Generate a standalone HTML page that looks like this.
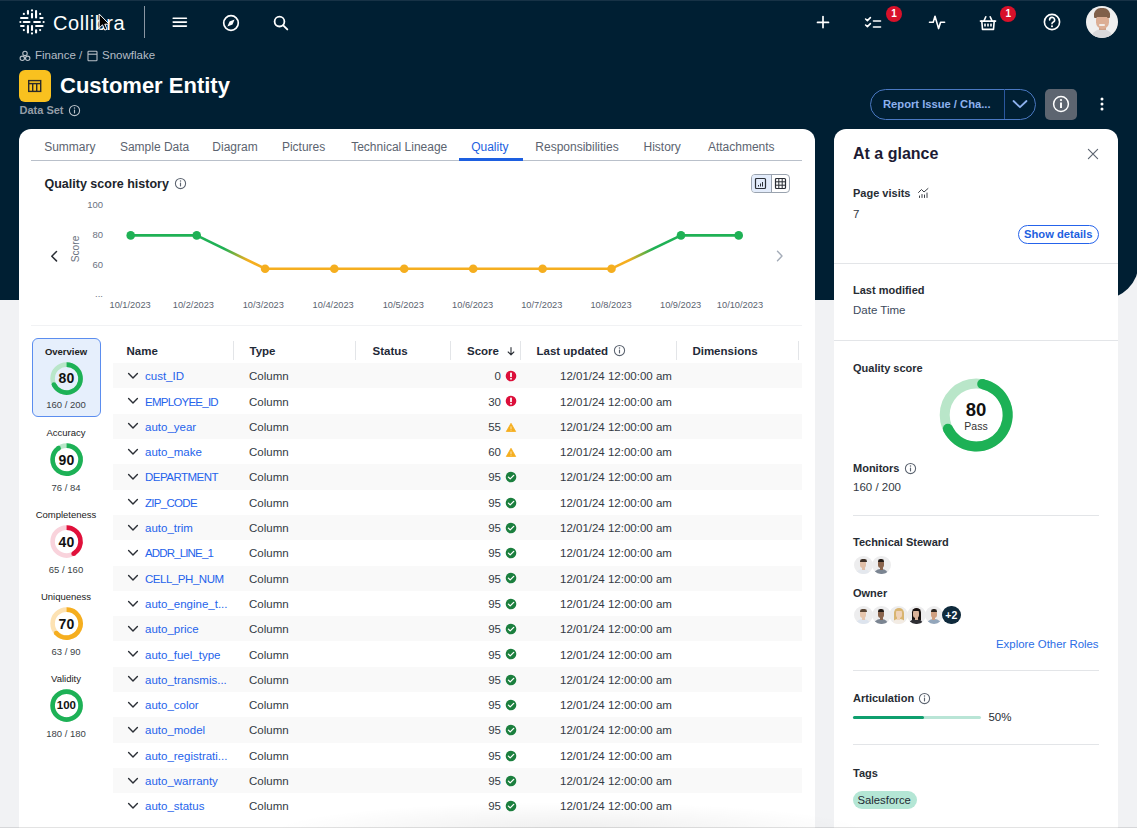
<!DOCTYPE html>
<html><head><meta charset="utf-8"><style>
*{box-sizing:border-box;margin:0;padding:0}
html,body{width:1137px;height:828px;overflow:hidden;background:#f1f2f4;font-family:"Liberation Sans",sans-serif;}
.a{position:absolute;white-space:nowrap}
#hdr{position:absolute;left:0;top:0;width:1139px;height:300px;background:#001f33;border-bottom-right-radius:38px}
#topline{position:absolute;left:0;top:0;width:1137px;height:1px;background:#173246}
.w{color:#fff}
.tab{position:absolute;top:140.8px;font-size:12px;color:#5c6470;line-height:12px}
.card{position:absolute;background:#fff}
.ylab{position:absolute;font-size:9.5px;color:#6b7280;text-align:right;width:30px;line-height:10px}
.xlab{position:absolute;font-size:9.25px;color:#5c6470;width:70px;text-align:center;line-height:10px;top:300px}
.row{position:absolute;left:113px;width:689px;height:25.3px}
.row.s{background:#f9f9f9}
.tn{position:absolute;left:145px;font-size:11.5px;color:#2563eb;line-height:14px}
.tt{position:absolute;left:249px;font-size:11.5px;color:#333a44;line-height:14px}
.ts{position:absolute;right:636px;font-size:11.5px;color:#333a44;line-height:14px;text-align:right}
.td{position:absolute;left:560px;font-size:11.5px;color:#333a44;line-height:14px}
.th{position:absolute;top:346.1px;font-size:11.5px;font-weight:bold;color:#1f2a37;line-height:11.5px}
.cdiv{position:absolute;top:341px;width:1px;height:19px;background:#e3e5e8}
.ql{position:absolute;left:31px;width:70px;text-align:center;font-size:9.5px;color:#222;line-height:11px}
.sep{position:absolute;height:1px;background:#e3e5e8}
</style></head><body>
<div id="hdr"></div><div id="topline"></div>
<svg class="a" style="left:15.5px;top:6.2px" width="32" height="32" viewBox="-16 -16 32 32"><g stroke="#fff" stroke-width="2.1" stroke-linecap="round" fill="#fff"><line x1="-4.06" y1="-10.96" x2="-4.06" y2="-8.36"/><circle cx="0.00" cy="-11.61" r="1.1" stroke="none"/><line x1="0.00" y1="-8.08" x2="0.00" y2="-4.51"/><line x1="4.06" y1="-10.96" x2="4.06" y2="-4.51"/><line x1="-10.96" y1="-4.06" x2="-4.51" y2="-4.06"/><circle cx="-11.61" cy="0.00" r="1.1" stroke="none"/><line x1="-8.28" y1="0.00" x2="-2.56" y2="0.00"/><line x1="-10.96" y1="4.06" x2="-8.36" y2="4.06"/><line x1="8.36" y1="-4.06" x2="10.56" y2="-4.06"/><line x1="2.19" y1="0.00" x2="7.88" y2="0.00"/><circle cx="11.61" cy="0.00" r="1.1" stroke="none"/><line x1="4.10" y1="4.06" x2="10.56" y2="4.06"/><line x1="-4.06" y1="4.10" x2="-4.06" y2="10.56"/><line x1="0.00" y1="4.10" x2="0.00" y2="7.88"/><circle cx="0.00" cy="11.41" r="1.1" stroke="none"/><line x1="4.06" y1="8.36" x2="4.06" y2="10.56"/><circle cx="-8.12" cy="-8.12" r="1.1" stroke="none"/><circle cx="8.12" cy="-8.12" r="1.1" stroke="none"/><circle cx="-8.12" cy="8.12" r="1.1" stroke="none"/><circle cx="8.12" cy="8.12" r="1.1" stroke="none"/></g></svg>

<div class="a w" style="left:53px;top:12.6px;font-size:20px;line-height:20px;letter-spacing:0.55px">Collibra</div>
<div class="a" style="left:144px;top:6px;width:1.2px;height:32px;background:#8a96a3"></div>
<svg class="a" style="left:171px;top:14px" width="18" height="16" viewBox="0 0 18 16"><g stroke="#fff" stroke-width="1.6" stroke-linecap="round"><line x1="2.2" y1="4.2" x2="15.4" y2="4.2"/><line x1="2.2" y1="8.1" x2="15.4" y2="8.1"/><line x1="2.2" y1="12.1" x2="15.4" y2="12.1"/></g></svg>
<svg class="a" style="left:221px;top:12.5px" width="20" height="20" viewBox="0 0 20 20"><circle cx="10" cy="10" r="7.3" stroke="#fff" stroke-width="1.7" fill="none"/><path d="M13.6 6.4 L11.5 11.5 L6.4 13.6 L8.5 8.5 Z" fill="#fff"/></svg>
<svg class="a" style="left:271px;top:12.5px" width="20" height="20" viewBox="0 0 20 20"><circle cx="8.5" cy="8.6" r="4.9" stroke="#fff" stroke-width="1.8" fill="none"/><line x1="12.2" y1="12.3" x2="16.3" y2="16.4" stroke="#fff" stroke-width="1.9" stroke-linecap="round"/></svg>
<svg class="a" style="left:813px;top:11.7px" width="20" height="20" viewBox="0 0 20 20"><g stroke="#fff" stroke-width="1.7" stroke-linecap="round"><line x1="10" y1="4.6" x2="10" y2="15.6"/><line x1="4.5" y1="10.4" x2="15.5" y2="10.4"/></g></svg>
<svg class="a" style="left:863px;top:12.5px" width="20" height="20" viewBox="0 0 20 20"><g stroke="#fff" stroke-width="1.6" stroke-linecap="round" stroke-linejoin="round" fill="none"><path d="M2.6 6 L4.4 7.6 L7.4 4.6"/><path d="M2.6 12 L4.4 13.6 L7.4 10.6"/><line x1="10.5" y1="8" x2="17.5" y2="8"/><line x1="10.5" y1="14" x2="17.5" y2="14"/></g></svg>
<div class="a" style="left:886px;top:6.4px;width:16px;height:16px;border-radius:8px;background:#d8112a;color:#fff;font-size:10px;font-weight:bold;text-align:center;line-height:16px">1</div>
<svg class="a" style="left:927px;top:11.7px" width="20" height="20" viewBox="0 0 20 20"><path d="M2.5 10.2 H6.2 L8 4.2 L11.6 16.6 L13.6 10.2 H17.6" stroke="#fff" stroke-width="1.6" fill="none" stroke-linejoin="round" stroke-linecap="round"/></svg>
<svg class="a" style="left:978px;top:12.5px" width="20" height="20" viewBox="0 0 20 20"><g stroke="#fff" stroke-width="1.6" fill="none" stroke-linejoin="round" stroke-linecap="round"><path d="M2.4 8.1 H17.6"/><path d="M3.8 8.1 L4.5 16.4 H15.5 L16.2 8.1"/><path d="M6.0 7.9 L7.8 3.8"/><path d="M14 7.9 L12.2 3.8"/></g><g fill="#fff"><rect x="6.2" y="10.6" width="1.6" height="2.9"/><rect x="9.2" y="10.6" width="1.6" height="2.9"/><rect x="12.2" y="10.6" width="1.6" height="2.9"/></g></svg>
<div class="a" style="left:1000.3px;top:6.3px;width:16px;height:16px;border-radius:8px;background:#d8112a;color:#fff;font-size:10px;font-weight:bold;text-align:center;line-height:16px">1</div>
<svg class="a" style="left:1042px;top:12.3px" width="20" height="20" viewBox="0 0 20 20"><circle cx="10" cy="10" r="7.6" stroke="#fff" stroke-width="1.6" fill="none"/><path d="M7.6 7.9 A2.5 2.5 0 1 1 11 10.2 Q10 10.7 10 11.8" stroke="#fff" stroke-width="1.6" fill="none" stroke-linecap="round"/><circle cx="10" cy="14.2" r="1" fill="#fff"/></svg>
<div class="a" style="left:1086.2px;top:6.2px;width:31.8px;height:31.8px;border-radius:15.9px;background:#efefef;overflow:hidden">
  <div class="a" style="left:4px;top:23px;width:24px;height:14px;border-radius:12px 12px 0 0;background:#d9d9db"></div>
  <div class="a" style="left:12.5px;top:19px;width:7px;height:5px;background:#cfa086"></div>
  <div class="a" style="left:9.5px;top:7.5px;width:13.5px;height:15.5px;border-radius:6.5px 6.5px 7.5px 7.5px;background:#dcae94"></div>
  <div class="a" style="left:8px;top:2px;width:15.8px;height:8.5px;border-radius:8px 8px 3px 3px;background:#80604a"></div>
  <div class="a" style="left:8px;top:7px;width:2.6px;height:5px;border-radius:1px;background:#80604a"></div>
  <div class="a" style="left:21px;top:7px;width:2.6px;height:5px;border-radius:1px;background:#80604a"></div>
  <div class="a" style="left:13px;top:17.6px;width:6px;height:1.8px;border-radius:1px;background:#f2ebe6"></div>
</div>
<svg class="a" style="left:19px;top:49.5px" width="12" height="12" viewBox="0 0 12 12"><g stroke="#b8c0c8" stroke-width="1.1" fill="none"><circle cx="6" cy="3.4" r="2.2"/><circle cx="3.3" cy="8.3" r="2.2"/><circle cx="8.7" cy="8.3" r="2.2"/></g></svg>
<div class="a" style="left:35px;top:49.6px;font-size:11.5px;line-height:11.5px;color:#b4bcc5">Finance /</div>
<svg class="a" style="left:87px;top:49.5px" width="11" height="12" viewBox="0 0 11 12"><g stroke="#b8c0c8" stroke-width="1.1" fill="none"><rect x="1" y="1.2" width="9" height="9.6" rx="0.8"/><line x1="1" y1="4.2" x2="10" y2="4.2"/></g></svg>
<div class="a" style="left:102px;top:49.6px;font-size:11.5px;line-height:11.5px;color:#b4bcc5">Snowflake</div>
<div class="a" style="left:19px;top:70px;width:31.5px;height:31.5px;border-radius:6px;background:#f9c11f"></div>
<svg class="a" style="left:27px;top:77.5px" width="16" height="16" viewBox="0 0 16 16"><g stroke="#2a2a2a" stroke-width="1.4" fill="none"><rect x="1.7" y="2.6" width="12" height="10.8"/><line x1="1.7" y1="5.6" x2="13.7" y2="5.6"/><line x1="5.7" y1="5.6" x2="5.7" y2="13.4"/><line x1="9.7" y1="5.6" x2="9.7" y2="13.4"/></g></svg>
<div class="a w" style="left:60px;top:74.9px;font-size:22px;line-height:22px;font-weight:bold">Customer Entity</div>
<div class="a" style="left:19.5px;top:105.3px;font-size:11px;line-height:11px;font-weight:bold;color:#949da7">Data Set</div>

<svg class="a" style="left:67.5px;top:104.3px" width="13" height="13" viewBox="0 0 13 13"><circle cx="6.5" cy="6.5" r="5.1" stroke="#b8c0c8" stroke-width="1.05" fill="none"/><line x1="6.5" y1="5.6" x2="6.5" y2="9.4" stroke="#b8c0c8" stroke-width="1.15"/><circle cx="6.5" cy="3.9" r="0.75" fill="#b8c0c8"/></svg>

<div class="a" style="left:870.3px;top:88.7px;width:165.3px;height:31px;border-radius:15.5px;border:1px solid #4a78c2"></div>
<div class="a" style="left:1003.5px;top:89px;width:1.2px;height:30px;background:#2a579e"></div>
<div class="a" style="left:883px;top:98.9px;font-size:11.2px;line-height:11.2px;font-weight:bold;color:#8db1ee">Report Issue / Cha...</div>
<svg class="a" style="left:1010px;top:96px" width="20" height="16" viewBox="0 0 20 16"><path d="M3.5 5 L10 11.2 L16.5 5" stroke="#8db1ee" stroke-width="1.8" fill="none" stroke-linecap="round" stroke-linejoin="round"/></svg>
<div class="a" style="left:1045.3px;top:88.7px;width:31.5px;height:31px;border-radius:5px;background:#5d6570"></div>
<svg class="a" style="left:1051px;top:94.2px" width="20" height="20" viewBox="0 0 20 20"><circle cx="10" cy="10" r="7.4" stroke="#fff" stroke-width="1.5" fill="none"/><line x1="10" y1="8.6" x2="10" y2="14" stroke="#fff" stroke-width="1.9"/><circle cx="10" cy="6.1" r="1.1" fill="#fff"/></svg>
<svg class="a" style="left:1097px;top:96px" width="10" height="16" viewBox="0 0 10 16"><g fill="#fff"><circle cx="5" cy="3" r="1.5"/><circle cx="5" cy="8" r="1.5"/><circle cx="5" cy="13" r="1.5"/></g></svg>

<div class="card" style="left:19px;top:129px;width:796px;height:720px;border-radius:12px 12px 0 0"></div>
<div class="card" style="left:834px;top:129px;width:284px;height:720px;border-radius:12px 12px 0 0"></div>
<div class="a" style="left:31px;top:159.8px;width:771px;height:1.2px;background:#b9c0ca"></div>
<div class="a" style="left:459px;top:158.2px;width:63.5px;height:2.6px;background:#1d5fe0"></div>
<div class="tab" style="left:44.2px">Summary</div><div class="tab" style="left:119.9px">Sample Data</div><div class="tab" style="left:212.3px">Diagram</div><div class="tab" style="left:281.9px">Pictures</div><div class="tab" style="left:351.2px">Technical Lineage</div><div class="tab" style="left:471.2px;color:#1d5fe0">Quality</div><div class="tab" style="left:535.3px">Responsibilities</div><div class="tab" style="left:643.5px">History</div><div class="tab" style="left:707.9px">Attachments</div>
<svg class="a" style="left:0;top:0" width="815" height="330" viewBox="0 0 815 330"><defs><linearGradient id="gd" gradientUnits="userSpaceOnUse" x1="196.7" y1="0" x2="265.1" y2="0"><stop offset="0.4" stop-color="#1fb155"/><stop offset="0.75" stop-color="#f5ae1f"/></linearGradient><linearGradient id="gu" gradientUnits="userSpaceOnUse" x1="611.5" y1="0" x2="681" y2="0"><stop offset="0.25" stop-color="#f5ae1f"/><stop offset="0.6" stop-color="#1fb155"/></linearGradient></defs><line x1="130.7" y1="235.4" x2="196.7" y2="235.4" stroke="#1fb155" stroke-width="2.6"/><line x1="196.7" y1="235.4" x2="265.1" y2="268.7" stroke="url(#gd)" stroke-width="2.6"/><line x1="265.1" y1="268.7" x2="334.3" y2="268.7" stroke="#f5ae1f" stroke-width="2.6"/><line x1="334.3" y1="268.7" x2="404.2" y2="268.7" stroke="#f5ae1f" stroke-width="2.6"/><line x1="404.2" y1="268.7" x2="473.2" y2="268.7" stroke="#f5ae1f" stroke-width="2.6"/><line x1="473.2" y1="268.7" x2="542.6" y2="268.7" stroke="#f5ae1f" stroke-width="2.6"/><line x1="542.6" y1="268.7" x2="611.5" y2="268.7" stroke="#f5ae1f" stroke-width="2.6"/><line x1="611.5" y1="268.7" x2="681" y2="235.4" stroke="url(#gu)" stroke-width="2.6"/><line x1="681" y1="235.4" x2="738.7" y2="235.4" stroke="#1fb155" stroke-width="2.6"/><circle cx="130.7" cy="235.4" r="4.3" fill="#1fb155"/><circle cx="196.7" cy="235.4" r="4.3" fill="#1fb155"/><circle cx="265.1" cy="268.7" r="4.3" fill="#f5ae1f"/><circle cx="334.3" cy="268.7" r="4.3" fill="#f5ae1f"/><circle cx="404.2" cy="268.7" r="4.3" fill="#f5ae1f"/><circle cx="473.2" cy="268.7" r="4.3" fill="#f5ae1f"/><circle cx="542.6" cy="268.7" r="4.3" fill="#f5ae1f"/><circle cx="611.5" cy="268.7" r="4.3" fill="#f5ae1f"/><circle cx="681" cy="235.4" r="4.3" fill="#1fb155"/><circle cx="738.7" cy="235.4" r="4.3" fill="#1fb155"/><path d="M56.5 251.5 L51.8 256.2 L56.5 260.9" stroke="#2b2f36" stroke-width="1.5" fill="none" stroke-linecap="round" stroke-linejoin="round"/><path d="M777.5 251.3 L782 256 L777.5 260.7" stroke="#a4acb8" stroke-width="1.4" fill="none" stroke-linecap="round" stroke-linejoin="round"/></svg>
<div class="xlab" style="left:95.1px">10/1/2023</div><div class="xlab" style="left:158.4px">10/2/2023</div><div class="xlab" style="left:228.3px">10/3/2023</div><div class="xlab" style="left:298.2px">10/4/2023</div><div class="xlab" style="left:368.3px">10/5/2023</div><div class="xlab" style="left:437.7px">10/6/2023</div><div class="xlab" style="left:506.79999999999995px">10/7/2023</div><div class="xlab" style="left:576px">10/8/2023</div><div class="xlab" style="left:645.6px">10/9/2023</div><div class="xlab" style="left:705px">10/10/2023</div>
<div class="a" style="left:44.5px;top:177.8px;font-size:12.5px;line-height:12.5px;font-weight:bold;color:#20242b">Quality score history</div>
<svg class="a" style="left:174.2px;top:177.2px" width="13" height="13" viewBox="0 0 13 13"><circle cx="6.5" cy="6.5" r="5.1" stroke="#5c6470" stroke-width="1.05" fill="none"/><line x1="6.5" y1="5.6" x2="6.5" y2="9.4" stroke="#5c6470" stroke-width="1.15"/><circle cx="6.5" cy="3.9" r="0.75" fill="#5c6470"/></svg>

<div class="a" style="left:751px;top:174px;width:38.5px;height:18.5px;border:1px solid #9aa3af;border-radius:4px;overflow:hidden;background:#fff"><div class="a" style="left:0;top:0;width:19px;height:17px;background:#e3ecfb"></div><div class="a" style="left:19px;top:0;width:1px;height:17px;background:#9aa3af"></div></div>
<svg class="a" style="left:754px;top:177px" width="13" height="13" viewBox="0 0 13 13"><rect x="1.5" y="1.5" width="10" height="10" rx="1" stroke="#2b2f36" stroke-width="1.2" fill="none"/><g stroke="#2b2f36" stroke-width="1"><line x1="4.5" y1="9.5" x2="4.5" y2="8"/><line x1="6.5" y1="9.5" x2="6.5" y2="6.5"/><line x1="8.5" y1="9.5" x2="8.5" y2="5"/></g></svg>
<svg class="a" style="left:773.5px;top:177px" width="13" height="13" viewBox="0 0 13 13"><rect x="1.5" y="1.5" width="10" height="10" rx="1" stroke="#2b2f36" stroke-width="1.2" fill="none"/><g stroke="#2b2f36" stroke-width="1"><line x1="4.8" y1="1.5" x2="4.8" y2="11.5"/><line x1="8.2" y1="1.5" x2="8.2" y2="11.5"/><line x1="1.5" y1="4.8" x2="11.5" y2="4.8"/><line x1="1.5" y1="8.2" x2="11.5" y2="8.2"/></g></svg>
<div class="ylab" style="left:73px;top:200.3px">100</div>
<div class="ylab" style="left:73px;top:230.2px">80</div>
<div class="ylab" style="left:73px;top:259.6px">60</div>
<div class="ylab" style="left:73px;top:289px">...</div>
<div class="a" style="left:55.5px;top:244.3px;width:40px;text-align:center;font-size:10.2px;line-height:10px;color:#6b7280;transform:rotate(-90deg)">Score</div>
<div class="a" style="left:31px;top:324.5px;width:771px;height:1px;background:#f1f2f4"></div>

<div class="a" style="left:31.5px;top:338.2px;width:69.5px;height:78.5px;border:1px solid #5b8def;border-radius:6px;background:#e6effc"></div>
<div class="ql" style="top:346.1px;font-weight:bold;">Overview</div>
<svg class="a" style="left:47.800000000000004px;top:359.9px" width="37.2" height="37.2" viewBox="47.800000000000004 359.9 37.2 37.2"><circle cx="66.4" cy="378.5" r="14" stroke="#b9e6c9" stroke-width="4.6" fill="none"/><path d="M66.40 364.50 A14 14 0 1 1 53.71 384.42" stroke="#1db156" stroke-width="4.6" fill="none"/><circle cx="53.71" cy="384.42" r="2.3" fill="#1db156"/></svg>
<div class="a" style="left:46.4px;width:40px;text-align:center;top:371.2px;font-size:14px;line-height:14px;font-weight:bold;color:#111">80</div>
<div class="ql" style="top:398.9px;color:#3a3f46">160 / 200</div>
<div class="ql" style="top:426.6px;">Accuracy</div>
<svg class="a" style="left:47.800000000000004px;top:441.29999999999995px" width="37.2" height="37.2" viewBox="47.800000000000004 441.29999999999995 37.2 37.2"><circle cx="66.4" cy="459.9" r="14" stroke="#b9e6c9" stroke-width="4.6" fill="none"/><path d="M66.40 445.90 A14 14 0 1 1 58.37 448.43" stroke="#1db156" stroke-width="4.6" fill="none"/><circle cx="58.37" cy="448.43" r="2.3" fill="#1db156"/></svg>
<div class="a" style="left:46.4px;width:40px;text-align:center;top:452.59999999999997px;font-size:14px;line-height:14px;font-weight:bold;color:#111">90</div>
<div class="ql" style="top:482.3px;color:#3a3f46">76 / 84</div>
<div class="ql" style="top:508.6px;">Completeness</div>
<svg class="a" style="left:47.800000000000004px;top:523.3px" width="37.2" height="37.2" viewBox="47.800000000000004 523.3 37.2 37.2"><circle cx="66.4" cy="541.9" r="14" stroke="#f9d3dc" stroke-width="4.6" fill="none"/><path d="M66.40 527.90 A14 14 0 0 1 73.40 554.02" stroke="#e0103a" stroke-width="4.6" fill="none"/><circle cx="73.40" cy="554.02" r="2.3" fill="#e0103a"/></svg>
<div class="a" style="left:46.4px;width:40px;text-align:center;top:534.6px;font-size:14px;line-height:14px;font-weight:bold;color:#111">40</div>
<div class="ql" style="top:564.3px;color:#3a3f46">65 / 160</div>
<div class="ql" style="top:590.6px;">Uniqueness</div>
<svg class="a" style="left:47.800000000000004px;top:605.3px" width="37.2" height="37.2" viewBox="47.800000000000004 605.3 37.2 37.2"><circle cx="66.4" cy="623.9" r="14" stroke="#fde2b3" stroke-width="4.6" fill="none"/><path d="M66.40 609.90 A14 14 0 1 1 56.00 633.27" stroke="#f5ae1f" stroke-width="4.6" fill="none"/><circle cx="56.00" cy="633.27" r="2.3" fill="#f5ae1f"/></svg>
<div class="a" style="left:46.4px;width:40px;text-align:center;top:616.6px;font-size:14px;line-height:14px;font-weight:bold;color:#111">70</div>
<div class="ql" style="top:646.3px;color:#3a3f46">63 / 90</div>
<div class="ql" style="top:672.6px;">Validity</div>
<svg class="a" style="left:47.800000000000004px;top:687.3px" width="37.2" height="37.2" viewBox="47.800000000000004 687.3 37.2 37.2"><circle cx="66.4" cy="705.9" r="14" stroke="#b9e6c9" stroke-width="4.6" fill="none"/><circle cx="66.4" cy="705.9" r="14" stroke="#1db156" stroke-width="4.6" fill="none"/></svg>
<div class="a" style="left:46.4px;width:40px;text-align:center;top:699.85px;font-size:11.5px;line-height:11.5px;font-weight:bold;color:#111">100</div>
<div class="ql" style="top:728.3px;color:#3a3f46">180 / 180</div>
<div class="th" style="left:126.5px">Name</div><div class="th" style="left:249.5px">Type</div><div class="th" style="left:372.5px">Status</div><div class="th" style="left:467px">Score</div><div class="th" style="left:536.5px">Last updated</div><div class="th" style="left:692.4px">Dimensions</div><div class="cdiv" style="left:232.9px"></div><div class="cdiv" style="left:355.3px"></div><div class="cdiv" style="left:450.0px"></div><div class="cdiv" style="left:519.8px"></div><div class="cdiv" style="left:675.5px"></div><div class="cdiv" style="left:798.0px"></div><svg class="a" style="left:505px;top:344px" width="12" height="14" viewBox="0 0 12 14"><path d="M6 3.6 V10.8 M3.2 8 L6 10.8 L8.8 8" stroke="#2b2f36" stroke-width="1.1" fill="none" stroke-linecap="round" stroke-linejoin="round"/></svg><svg class="a" style="left:612.7px;top:344.2px" width="13" height="13" viewBox="0 0 13 13"><circle cx="6.5" cy="6.5" r="5.1" stroke="#5c6470" stroke-width="1.05" fill="none"/><line x1="6.5" y1="5.6" x2="6.5" y2="9.4" stroke="#5c6470" stroke-width="1.15"/><circle cx="6.5" cy="3.9" r="0.75" fill="#5c6470"/></svg><div class="row s" style="top:363.10px"></div><svg class="a" style="left:126.6px;top:369.80px" width="12" height="12" viewBox="0 0 12 12"><path d="M1.6 3.6 L6 8 L10.4 3.6" stroke="#2b2f36" stroke-width="1.4" fill="none" stroke-linecap="round" stroke-linejoin="round"/></svg><div class="tn" style="top:369.20px;letter-spacing:0px">cust_ID</div><div class="tt" style="top:369.20px">Column</div><div class="ts" style="top:369.20px">0</div><div class="td" style="top:369.20px">12/01/24 12:00:00 am</div><svg class="a" style="left:505.1px;top:370.00px" width="12" height="12" viewBox="0 0 12 12"><circle cx="6" cy="6" r="5.3" fill="#dc0f3a"/><rect x="5.1" y="2.6" width="1.8" height="4.4" rx="0.6" fill="#fff"/><circle cx="6" cy="8.8" r="0.95" fill="#fff"/></svg><svg class="a" style="left:126.6px;top:395.10px" width="12" height="12" viewBox="0 0 12 12"><path d="M1.6 3.6 L6 8 L10.4 3.6" stroke="#2b2f36" stroke-width="1.4" fill="none" stroke-linecap="round" stroke-linejoin="round"/></svg><div class="tn" style="top:394.50px;letter-spacing:-0.75px">EMPLOYEE_ID</div><div class="tt" style="top:394.50px">Column</div><div class="ts" style="top:394.50px">30</div><div class="td" style="top:394.50px">12/01/24 12:00:00 am</div><svg class="a" style="left:505.1px;top:395.30px" width="12" height="12" viewBox="0 0 12 12"><circle cx="6" cy="6" r="5.3" fill="#dc0f3a"/><rect x="5.1" y="2.6" width="1.8" height="4.4" rx="0.6" fill="#fff"/><circle cx="6" cy="8.8" r="0.95" fill="#fff"/></svg><div class="row s" style="top:413.70px"></div><svg class="a" style="left:126.6px;top:420.40px" width="12" height="12" viewBox="0 0 12 12"><path d="M1.6 3.6 L6 8 L10.4 3.6" stroke="#2b2f36" stroke-width="1.4" fill="none" stroke-linecap="round" stroke-linejoin="round"/></svg><div class="tn" style="top:419.80px;letter-spacing:0px">auto_year</div><div class="tt" style="top:419.80px">Column</div><div class="ts" style="top:419.80px">55</div><div class="td" style="top:419.80px">12/01/24 12:00:00 am</div><svg class="a" style="left:505.1px;top:420.60px" width="12" height="12" viewBox="0 0 12 12"><path d="M6 2.3 L10.7 10.5 H1.3 Z" fill="#f5ae1f" stroke="#f5ae1f" stroke-width="0.8" stroke-linejoin="round"/><rect x="5.45" y="5.4" width="1.1" height="2.6" fill="#fff" opacity="0.6"/><circle cx="6" cy="9.1" r="0.55" fill="#fff" opacity="0.6"/></svg><svg class="a" style="left:126.6px;top:445.70px" width="12" height="12" viewBox="0 0 12 12"><path d="M1.6 3.6 L6 8 L10.4 3.6" stroke="#2b2f36" stroke-width="1.4" fill="none" stroke-linecap="round" stroke-linejoin="round"/></svg><div class="tn" style="top:445.10px;letter-spacing:0px">auto_make</div><div class="tt" style="top:445.10px">Column</div><div class="ts" style="top:445.10px">60</div><div class="td" style="top:445.10px">12/01/24 12:00:00 am</div><svg class="a" style="left:505.1px;top:445.90px" width="12" height="12" viewBox="0 0 12 12"><path d="M6 2.3 L10.7 10.5 H1.3 Z" fill="#f5ae1f" stroke="#f5ae1f" stroke-width="0.8" stroke-linejoin="round"/><rect x="5.45" y="5.4" width="1.1" height="2.6" fill="#fff" opacity="0.6"/><circle cx="6" cy="9.1" r="0.55" fill="#fff" opacity="0.6"/></svg><div class="row s" style="top:464.30px"></div><svg class="a" style="left:126.6px;top:471.00px" width="12" height="12" viewBox="0 0 12 12"><path d="M1.6 3.6 L6 8 L10.4 3.6" stroke="#2b2f36" stroke-width="1.4" fill="none" stroke-linecap="round" stroke-linejoin="round"/></svg><div class="tn" style="top:470.40px;letter-spacing:-0.52px">DEPARTMENT</div><div class="tt" style="top:470.40px">Column</div><div class="ts" style="top:470.40px">95</div><div class="td" style="top:470.40px">12/01/24 12:00:00 am</div><svg class="a" style="left:505.1px;top:471.20px" width="12" height="12" viewBox="0 0 12 12"><circle cx="6" cy="6" r="5.3" fill="#1b7f3e"/><path d="M3.4 6.1 L5.2 7.9 L8.7 4.4" stroke="#fff" stroke-width="1.3" fill="none" stroke-linecap="round" stroke-linejoin="round"/></svg><svg class="a" style="left:126.6px;top:496.30px" width="12" height="12" viewBox="0 0 12 12"><path d="M1.6 3.6 L6 8 L10.4 3.6" stroke="#2b2f36" stroke-width="1.4" fill="none" stroke-linecap="round" stroke-linejoin="round"/></svg><div class="tn" style="top:495.70px;letter-spacing:-0.7px">ZIP_CODE</div><div class="tt" style="top:495.70px">Column</div><div class="ts" style="top:495.70px">95</div><div class="td" style="top:495.70px">12/01/24 12:00:00 am</div><svg class="a" style="left:505.1px;top:496.50px" width="12" height="12" viewBox="0 0 12 12"><circle cx="6" cy="6" r="5.3" fill="#1b7f3e"/><path d="M3.4 6.1 L5.2 7.9 L8.7 4.4" stroke="#fff" stroke-width="1.3" fill="none" stroke-linecap="round" stroke-linejoin="round"/></svg><div class="row s" style="top:514.90px"></div><svg class="a" style="left:126.6px;top:521.60px" width="12" height="12" viewBox="0 0 12 12"><path d="M1.6 3.6 L6 8 L10.4 3.6" stroke="#2b2f36" stroke-width="1.4" fill="none" stroke-linecap="round" stroke-linejoin="round"/></svg><div class="tn" style="top:521.00px;letter-spacing:0px">auto_trim</div><div class="tt" style="top:521.00px">Column</div><div class="ts" style="top:521.00px">95</div><div class="td" style="top:521.00px">12/01/24 12:00:00 am</div><svg class="a" style="left:505.1px;top:521.80px" width="12" height="12" viewBox="0 0 12 12"><circle cx="6" cy="6" r="5.3" fill="#1b7f3e"/><path d="M3.4 6.1 L5.2 7.9 L8.7 4.4" stroke="#fff" stroke-width="1.3" fill="none" stroke-linecap="round" stroke-linejoin="round"/></svg><svg class="a" style="left:126.6px;top:546.90px" width="12" height="12" viewBox="0 0 12 12"><path d="M1.6 3.6 L6 8 L10.4 3.6" stroke="#2b2f36" stroke-width="1.4" fill="none" stroke-linecap="round" stroke-linejoin="round"/></svg><div class="tn" style="top:546.30px;letter-spacing:-0.85px">ADDR_LINE_1</div><div class="tt" style="top:546.30px">Column</div><div class="ts" style="top:546.30px">95</div><div class="td" style="top:546.30px">12/01/24 12:00:00 am</div><svg class="a" style="left:505.1px;top:547.10px" width="12" height="12" viewBox="0 0 12 12"><circle cx="6" cy="6" r="5.3" fill="#1b7f3e"/><path d="M3.4 6.1 L5.2 7.9 L8.7 4.4" stroke="#fff" stroke-width="1.3" fill="none" stroke-linecap="round" stroke-linejoin="round"/></svg><div class="row s" style="top:565.50px"></div><svg class="a" style="left:126.6px;top:572.20px" width="12" height="12" viewBox="0 0 12 12"><path d="M1.6 3.6 L6 8 L10.4 3.6" stroke="#2b2f36" stroke-width="1.4" fill="none" stroke-linecap="round" stroke-linejoin="round"/></svg><div class="tn" style="top:571.60px;letter-spacing:-0.46px">CELL_PH_NUM</div><div class="tt" style="top:571.60px">Column</div><div class="ts" style="top:571.60px">95</div><div class="td" style="top:571.60px">12/01/24 12:00:00 am</div><svg class="a" style="left:505.1px;top:572.40px" width="12" height="12" viewBox="0 0 12 12"><circle cx="6" cy="6" r="5.3" fill="#1b7f3e"/><path d="M3.4 6.1 L5.2 7.9 L8.7 4.4" stroke="#fff" stroke-width="1.3" fill="none" stroke-linecap="round" stroke-linejoin="round"/></svg><svg class="a" style="left:126.6px;top:597.50px" width="12" height="12" viewBox="0 0 12 12"><path d="M1.6 3.6 L6 8 L10.4 3.6" stroke="#2b2f36" stroke-width="1.4" fill="none" stroke-linecap="round" stroke-linejoin="round"/></svg><div class="tn" style="top:596.90px;letter-spacing:0px">auto_engine_t...</div><div class="tt" style="top:596.90px">Column</div><div class="ts" style="top:596.90px">95</div><div class="td" style="top:596.90px">12/01/24 12:00:00 am</div><svg class="a" style="left:505.1px;top:597.70px" width="12" height="12" viewBox="0 0 12 12"><circle cx="6" cy="6" r="5.3" fill="#1b7f3e"/><path d="M3.4 6.1 L5.2 7.9 L8.7 4.4" stroke="#fff" stroke-width="1.3" fill="none" stroke-linecap="round" stroke-linejoin="round"/></svg><div class="row s" style="top:616.10px"></div><svg class="a" style="left:126.6px;top:622.80px" width="12" height="12" viewBox="0 0 12 12"><path d="M1.6 3.6 L6 8 L10.4 3.6" stroke="#2b2f36" stroke-width="1.4" fill="none" stroke-linecap="round" stroke-linejoin="round"/></svg><div class="tn" style="top:622.20px;letter-spacing:0px">auto_price</div><div class="tt" style="top:622.20px">Column</div><div class="ts" style="top:622.20px">95</div><div class="td" style="top:622.20px">12/01/24 12:00:00 am</div><svg class="a" style="left:505.1px;top:623.00px" width="12" height="12" viewBox="0 0 12 12"><circle cx="6" cy="6" r="5.3" fill="#1b7f3e"/><path d="M3.4 6.1 L5.2 7.9 L8.7 4.4" stroke="#fff" stroke-width="1.3" fill="none" stroke-linecap="round" stroke-linejoin="round"/></svg><svg class="a" style="left:126.6px;top:648.10px" width="12" height="12" viewBox="0 0 12 12"><path d="M1.6 3.6 L6 8 L10.4 3.6" stroke="#2b2f36" stroke-width="1.4" fill="none" stroke-linecap="round" stroke-linejoin="round"/></svg><div class="tn" style="top:647.50px;letter-spacing:0px">auto_fuel_type</div><div class="tt" style="top:647.50px">Column</div><div class="ts" style="top:647.50px">95</div><div class="td" style="top:647.50px">12/01/24 12:00:00 am</div><svg class="a" style="left:505.1px;top:648.30px" width="12" height="12" viewBox="0 0 12 12"><circle cx="6" cy="6" r="5.3" fill="#1b7f3e"/><path d="M3.4 6.1 L5.2 7.9 L8.7 4.4" stroke="#fff" stroke-width="1.3" fill="none" stroke-linecap="round" stroke-linejoin="round"/></svg><div class="row s" style="top:666.70px"></div><svg class="a" style="left:126.6px;top:673.40px" width="12" height="12" viewBox="0 0 12 12"><path d="M1.6 3.6 L6 8 L10.4 3.6" stroke="#2b2f36" stroke-width="1.4" fill="none" stroke-linecap="round" stroke-linejoin="round"/></svg><div class="tn" style="top:672.80px;letter-spacing:0px">auto_transmis...</div><div class="tt" style="top:672.80px">Column</div><div class="ts" style="top:672.80px">95</div><div class="td" style="top:672.80px">12/01/24 12:00:00 am</div><svg class="a" style="left:505.1px;top:673.60px" width="12" height="12" viewBox="0 0 12 12"><circle cx="6" cy="6" r="5.3" fill="#1b7f3e"/><path d="M3.4 6.1 L5.2 7.9 L8.7 4.4" stroke="#fff" stroke-width="1.3" fill="none" stroke-linecap="round" stroke-linejoin="round"/></svg><svg class="a" style="left:126.6px;top:698.70px" width="12" height="12" viewBox="0 0 12 12"><path d="M1.6 3.6 L6 8 L10.4 3.6" stroke="#2b2f36" stroke-width="1.4" fill="none" stroke-linecap="round" stroke-linejoin="round"/></svg><div class="tn" style="top:698.10px;letter-spacing:0px">auto_color</div><div class="tt" style="top:698.10px">Column</div><div class="ts" style="top:698.10px">95</div><div class="td" style="top:698.10px">12/01/24 12:00:00 am</div><svg class="a" style="left:505.1px;top:698.90px" width="12" height="12" viewBox="0 0 12 12"><circle cx="6" cy="6" r="5.3" fill="#1b7f3e"/><path d="M3.4 6.1 L5.2 7.9 L8.7 4.4" stroke="#fff" stroke-width="1.3" fill="none" stroke-linecap="round" stroke-linejoin="round"/></svg><div class="row s" style="top:717.30px"></div><svg class="a" style="left:126.6px;top:724.00px" width="12" height="12" viewBox="0 0 12 12"><path d="M1.6 3.6 L6 8 L10.4 3.6" stroke="#2b2f36" stroke-width="1.4" fill="none" stroke-linecap="round" stroke-linejoin="round"/></svg><div class="tn" style="top:723.40px;letter-spacing:0px">auto_model</div><div class="tt" style="top:723.40px">Column</div><div class="ts" style="top:723.40px">95</div><div class="td" style="top:723.40px">12/01/24 12:00:00 am</div><svg class="a" style="left:505.1px;top:724.20px" width="12" height="12" viewBox="0 0 12 12"><circle cx="6" cy="6" r="5.3" fill="#1b7f3e"/><path d="M3.4 6.1 L5.2 7.9 L8.7 4.4" stroke="#fff" stroke-width="1.3" fill="none" stroke-linecap="round" stroke-linejoin="round"/></svg><svg class="a" style="left:126.6px;top:749.30px" width="12" height="12" viewBox="0 0 12 12"><path d="M1.6 3.6 L6 8 L10.4 3.6" stroke="#2b2f36" stroke-width="1.4" fill="none" stroke-linecap="round" stroke-linejoin="round"/></svg><div class="tn" style="top:748.70px;letter-spacing:0px">auto_registrati...</div><div class="tt" style="top:748.70px">Column</div><div class="ts" style="top:748.70px">95</div><div class="td" style="top:748.70px">12/01/24 12:00:00 am</div><svg class="a" style="left:505.1px;top:749.50px" width="12" height="12" viewBox="0 0 12 12"><circle cx="6" cy="6" r="5.3" fill="#1b7f3e"/><path d="M3.4 6.1 L5.2 7.9 L8.7 4.4" stroke="#fff" stroke-width="1.3" fill="none" stroke-linecap="round" stroke-linejoin="round"/></svg><div class="row s" style="top:767.90px"></div><svg class="a" style="left:126.6px;top:774.60px" width="12" height="12" viewBox="0 0 12 12"><path d="M1.6 3.6 L6 8 L10.4 3.6" stroke="#2b2f36" stroke-width="1.4" fill="none" stroke-linecap="round" stroke-linejoin="round"/></svg><div class="tn" style="top:774.00px;letter-spacing:0px">auto_warranty</div><div class="tt" style="top:774.00px">Column</div><div class="ts" style="top:774.00px">95</div><div class="td" style="top:774.00px">12/01/24 12:00:00 am</div><svg class="a" style="left:505.1px;top:774.80px" width="12" height="12" viewBox="0 0 12 12"><circle cx="6" cy="6" r="5.3" fill="#1b7f3e"/><path d="M3.4 6.1 L5.2 7.9 L8.7 4.4" stroke="#fff" stroke-width="1.3" fill="none" stroke-linecap="round" stroke-linejoin="round"/></svg><svg class="a" style="left:126.6px;top:799.90px" width="12" height="12" viewBox="0 0 12 12"><path d="M1.6 3.6 L6 8 L10.4 3.6" stroke="#2b2f36" stroke-width="1.4" fill="none" stroke-linecap="round" stroke-linejoin="round"/></svg><div class="tn" style="top:799.30px;letter-spacing:0px">auto_status</div><div class="tt" style="top:799.30px">Column</div><div class="ts" style="top:799.30px">95</div><div class="td" style="top:799.30px">12/01/24 12:00:00 am</div><svg class="a" style="left:505.1px;top:800.10px" width="12" height="12" viewBox="0 0 12 12"><circle cx="6" cy="6" r="5.3" fill="#1b7f3e"/><path d="M3.4 6.1 L5.2 7.9 L8.7 4.4" stroke="#fff" stroke-width="1.3" fill="none" stroke-linecap="round" stroke-linejoin="round"/></svg>
<svg class="a" style="left:930px;top:369px" width="92" height="92" viewBox="930 369 92 92"><circle cx="976.2" cy="415" r="31.5" stroke="#b9e6c9" stroke-width="10" fill="none"/><path d="M982.21 384.08 A31.5 31.5 0 1 1 947.89 428.81" stroke="#1db156" stroke-width="10" fill="none"/><circle cx="947.89" cy="428.81" r="5.0" fill="#1db156"/><circle cx="982.21" cy="384.08" r="5.0" fill="#1db156"/></svg>
<div class="a" style="left:853px;top:145.50px;font-size:16px;line-height:16px;font-weight:bold;color:#1c1a33;">At a glance</div><svg class="a" style="left:1086px;top:146.5px" width="14" height="14" viewBox="0 0 14 14"><path d="M2.4 2.4 L11.6 11.6 M11.6 2.4 L2.4 11.6" stroke="#5c6470" stroke-width="1.15" stroke-linecap="round"/></svg><div class="a" style="left:853px;top:187.50px;font-size:11px;line-height:11px;font-weight:bold;color:#272c33;">Page visits</div><svg class="a" style="left:917px;top:187px" width="13" height="12" viewBox="0 0 13 12"><g stroke="#3a3f46" stroke-width="1" fill="none" stroke-linecap="round"><path d="M1.5 5.5 L4.5 2.5 L7 5 L11 1.5"/><line x1="2.5" y1="10.5" x2="2.5" y2="9"/><line x1="5" y1="10.5" x2="5" y2="7.5"/><line x1="7.5" y1="10.5" x2="7.5" y2="8"/><line x1="10" y1="10.5" x2="10" y2="6"/></g></svg><div class="a" style="left:853px;top:208.85px;font-size:11.5px;line-height:11.5px;color:#333a44;">7</div><div class="a" style="left:1017.6px;top:225.2px;width:81.2px;height:19px;border:1px solid #2563eb;border-radius:10px"></div><div class="a" style="left:1024px;top:229.00px;font-size:11.2px;line-height:11.2px;font-weight:bold;color:#1d5fe0;">Show details</div><div class="sep" style="left:834px;top:263px;width:284px"></div><div class="a" style="left:853px;top:285.20px;font-size:11px;line-height:11px;font-weight:bold;color:#272c33;">Last modified</div><div class="a" style="left:853px;top:304.95px;font-size:11.5px;line-height:11.5px;color:#3d4a5c;">Date Time</div><div class="sep" style="left:834px;top:340px;width:284px"></div><div class="a" style="left:853px;top:362.50px;font-size:11px;line-height:11px;font-weight:bold;color:#272c33;">Quality score</div><div class="a" style="left:946px;width:60px;text-align:center;top:400.5px;font-size:18.5px;line-height:18.5px;font-weight:bold;color:#111">80</div><div class="a" style="left:946px;width:60px;text-align:center;top:420.8px;font-size:10.5px;line-height:10.5px;color:#333">Pass</div><div class="a" style="left:853px;top:462.60px;font-size:11px;line-height:11px;font-weight:bold;color:#272c33;">Monitors</div><svg class="a" style="left:903.9px;top:461.9px" width="13" height="13" viewBox="0 0 13 13"><circle cx="6.5" cy="6.5" r="5.1" stroke="#5c6470" stroke-width="1.05" fill="none"/><line x1="6.5" y1="5.6" x2="6.5" y2="9.4" stroke="#5c6470" stroke-width="1.15"/><circle cx="6.5" cy="3.9" r="0.75" fill="#5c6470"/></svg><div class="a" style="left:853px;top:481.75px;font-size:11.5px;line-height:11.5px;color:#333a44;">160 / 200</div><div class="sep" style="left:852.6px;top:514.6px;width:246.4px"></div><div class="a" style="left:853px;top:537.00px;font-size:11px;line-height:11px;font-weight:bold;color:#272c33;">Technical Steward</div><div class="a" style="left:854.1px;top:555.6px;width:18.8px;height:18.8px;border-radius:9.4px;background:#ededee;overflow:hidden"><div class="a" style="left:2.4px;top:13.6px;width:14px;height:8px;border-radius:6px 6px 0 0;background:#e4e8ee"></div><div class="a" style="left:7.9px;top:11px;width:3px;height:3.5px;background:#e0bfa8"></div><div class="a" style="left:6.4px;top:4px;width:6px;height:8.2px;border-radius:3px 3px 3.4px 3.4px;background:#e0bfa8"></div><div class="a" style="left:6.1px;top:3.2px;width:6.6px;height:2.8px;border-radius:3.3px 3.3px 0.8px 0.8px;background:#3e3128"></div></div><div class="a" style="left:871.8000000000001px;top:555.6px;width:18.8px;height:18.8px;border-radius:9.4px;background:#ededee;overflow:hidden"><div class="a" style="left:2.4px;top:13.6px;width:14px;height:8px;border-radius:6px 6px 0 0;background:#7b8592"></div><div class="a" style="left:7.9px;top:11px;width:3px;height:3.5px;background:#8a644c"></div><div class="a" style="left:6.4px;top:4px;width:6px;height:8.2px;border-radius:3px 3px 3.4px 3.4px;background:#8a644c"></div><div class="a" style="left:6.1px;top:3.2px;width:6.6px;height:2.8px;border-radius:3.3px 3.3px 0.8px 0.8px;background:#221a15"></div></div><div class="a" style="left:853px;top:587.80px;font-size:11px;line-height:11px;font-weight:bold;color:#272c33;">Owner</div><div class="a" style="left:854.1px;top:605.7px;width:18.8px;height:18.8px;border-radius:9.4px;background:#ededee;overflow:hidden"><div class="a" style="left:2.4px;top:13.6px;width:14px;height:8px;border-radius:6px 6px 0 0;background:#dde4ee"></div><div class="a" style="left:7.9px;top:11px;width:3px;height:3.5px;background:#e6c6ae"></div><div class="a" style="left:6.4px;top:4px;width:6px;height:8.2px;border-radius:3px 3px 3.4px 3.4px;background:#e6c6ae"></div><div class="a" style="left:6.1px;top:3.2px;width:6.6px;height:2.8px;border-radius:3.3px 3.3px 0.8px 0.8px;background:#5a4636"></div></div><div class="a" style="left:871.8000000000001px;top:605.7px;width:18.8px;height:18.8px;border-radius:9.4px;background:#ededee;overflow:hidden"><div class="a" style="left:2.4px;top:13.6px;width:14px;height:8px;border-radius:6px 6px 0 0;background:#7b8592"></div><div class="a" style="left:7.9px;top:11px;width:3px;height:3.5px;background:#8a644c"></div><div class="a" style="left:6.4px;top:4px;width:6px;height:8.2px;border-radius:3px 3px 3.4px 3.4px;background:#8a644c"></div><div class="a" style="left:6.1px;top:3.2px;width:6.6px;height:2.8px;border-radius:3.3px 3.3px 0.8px 0.8px;background:#221a15"></div></div><div class="a" style="left:889.4px;top:605.7px;width:18.8px;height:18.8px;border-radius:9.4px;background:#ededee;overflow:hidden"><div class="a" style="left:4.6px;top:2.2px;width:9.6px;height:13px;border-radius:4.8px 4.8px 1.5px 1.5px;background:#d8b470"></div><div class="a" style="left:2.4px;top:13.6px;width:14px;height:8px;border-radius:6px 6px 0 0;background:#f3ece4"></div><div class="a" style="left:7.9px;top:11px;width:3px;height:3.5px;background:#efd2b8"></div><div class="a" style="left:6.4px;top:4px;width:6px;height:8.2px;border-radius:3px 3px 3.4px 3.4px;background:#efd2b8"></div><div class="a" style="left:6.1px;top:3px;width:6.6px;height:2.2px;border-radius:3.3px 3.3px 0.8px 0.8px;background:#d8b470"></div></div><div class="a" style="left:907.0px;top:605.7px;width:18.8px;height:18.8px;border-radius:9.4px;background:#ededee;overflow:hidden"><div class="a" style="left:4.6px;top:2.2px;width:9.6px;height:13px;border-radius:4.8px 4.8px 1.5px 1.5px;background:#1a1210"></div><div class="a" style="left:2.4px;top:13.6px;width:14px;height:8px;border-radius:6px 6px 0 0;background:#2e2e33"></div><div class="a" style="left:7.9px;top:11px;width:3px;height:3.5px;background:#dcb49a"></div><div class="a" style="left:6.4px;top:4px;width:6px;height:8.2px;border-radius:3px 3px 3.4px 3.4px;background:#dcb49a"></div><div class="a" style="left:6.1px;top:3px;width:6.6px;height:2.2px;border-radius:3.3px 3.3px 0.8px 0.8px;background:#1a1210"></div></div><div class="a" style="left:924.6px;top:605.7px;width:18.8px;height:18.8px;border-radius:9.4px;background:#ededee;overflow:hidden"><div class="a" style="left:2.4px;top:13.6px;width:14px;height:8px;border-radius:6px 6px 0 0;background:#93a6bb"></div><div class="a" style="left:7.9px;top:11px;width:3px;height:3.5px;background:#cf9f80"></div><div class="a" style="left:6.4px;top:4px;width:6px;height:8.2px;border-radius:3px 3px 3.4px 3.4px;background:#cf9f80"></div><div class="a" style="left:6.1px;top:3.2px;width:6.6px;height:2.8px;border-radius:3.3px 3.3px 0.8px 0.8px;background:#2a2420"></div></div><div class="a" style="left:941.9px;top:605.7px;width:18.8px;height:18.8px;border-radius:9.4px;background:#0f2a3c;color:#fff;font-size:10.5px;font-weight:bold;text-align:center;line-height:18.8px">+2</div><div class="a" style="left:996px;top:638.50px;font-size:11.4px;line-height:11.4px;color:#2b6de6;">Explore Other Roles</div><div class="sep" style="left:852.6px;top:670.4px;width:246.4px"></div><div class="a" style="left:853px;top:692.80px;font-size:11px;line-height:11px;font-weight:bold;color:#272c33;">Articulation</div><svg class="a" style="left:918.4px;top:692.1px" width="13" height="13" viewBox="0 0 13 13"><circle cx="6.5" cy="6.5" r="5.1" stroke="#5c6470" stroke-width="1.05" fill="none"/><line x1="6.5" y1="5.6" x2="6.5" y2="9.4" stroke="#5c6470" stroke-width="1.15"/><circle cx="6.5" cy="3.9" r="0.75" fill="#5c6470"/></svg><div class="a" style="left:853px;top:715.7px;width:128.3px;height:3px;border-radius:1.5px;background:#b9e5d6"></div><div class="a" style="left:853px;top:715.7px;width:71.3px;height:3px;border-radius:1.5px;background:#0f9f6e"></div><div class="a" style="left:988.4px;top:711.75px;font-size:11.5px;line-height:11.5px;color:#272c33;">50%</div><div class="sep" style="left:852.6px;top:743.8px;width:246.4px"></div><div class="a" style="left:853px;top:768.20px;font-size:11px;line-height:11px;font-weight:bold;color:#272c33;">Tags</div><div class="a" style="left:853px;top:790.6px;width:64.4px;height:18.6px;border-radius:9.3px;background:#b4e6d5"></div><div class="a" style="left:857.5px;top:794.65px;font-size:11.3px;line-height:11.3px;color:#1f2a33;">Salesforce</div><div class="a" style="left:0;top:798px;width:1137px;height:30px;background:radial-gradient(ellipse 300px 30px at 570px 34px, rgba(0,0,0,0.07), rgba(0,0,0,0.03) 55%, rgba(0,0,0,0) 100%)"></div><div class="a" style="left:0;top:827px;width:1137px;height:1px;background:rgba(0,0,0,0.11)"></div><svg class="a" style="left:97px;top:12px" width="16" height="22" viewBox="-2.2 -2 16 22"><path d="M0 0 L0 14 L3.3 10.8 L5.6 16.1 L7.8 15.2 L5.6 10.2 L10 10.2 Z" fill="#000" stroke="#fff" stroke-width="1" stroke-linejoin="round"/></svg>
</body></html>
